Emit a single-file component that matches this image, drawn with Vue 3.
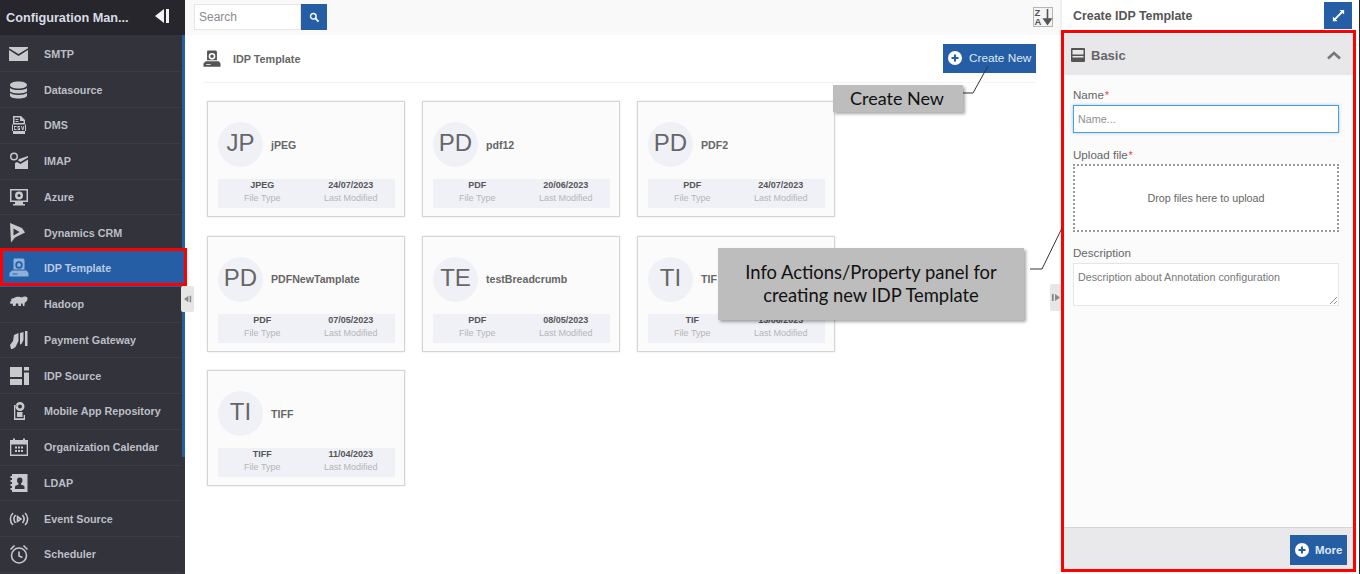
<template>
  <div class="page">
    <aside class="side">
      <header class="side-head">
        <span class="side-title">Configuration Man...</span>
        <svg class="collapse" viewBox="0 0 16 16"><path d="M10 1v14L1 8zM12 1h3v14h-3z" /></svg>
      </header>
      <nav class="nav">
        <a v-for="item in nav" :key="item.label" class="nav-item" :class="{ active: item.active }">
          <svg class="nav-icon" viewBox="0 0 20 20">
            <path v-if="item.fill" :d="item.fill" class="ifill" fill-rule="evenodd" />
            <path v-if="item.line" :d="item.line" class="iline" />
          </svg>
          <span>{{ item.label }}</span>
        </a>
      </nav>
    </aside>

    <main class="main">
      <div class="toolbar">
        <div class="search">
          <span class="search-input">Search</span>
          <button class="search-btn">
            <svg viewBox="0 0 14 14" width="11" height="11"><circle cx="5.5" cy="5.5" r="3.6" fill="none" stroke="#fff" stroke-width="1.8" /><path d="M8.2 8.2l4 4" stroke="#fff" stroke-width="2.4" /></svg>
          </button>
        </div>
        <svg class="sort" viewBox="0 0 20 20">
          <rect x=".5" y=".5" width="19" height="19" fill="#f4f4f4" stroke="#b5b5b5" />
          <text x="1.5" y="9" class="sort-t">Z</text>
          <text x="1.5" y="18" class="sort-t">A</text>
          <path d="M14.5 2v13M11 12l3.500 5 3.500-5z" stroke="#555" stroke-width="1.6" fill="#555" />
        </svg>
      </div>
      <div class="content">
        <div class="heading">
          <svg class="head-icon" viewBox="0 0 20 20">
            <path :d="idpIcon" fill="#555" fill-rule="evenodd" />
          </svg>
          <span class="head-title">IDP Template</span>
          <button class="btn create">
            <svg class="plus" viewBox="0 0 14 14"><circle cx="7" cy="7" r="7" fill="#fff" /><path d="M3.5 7h7M7 3.5v7" stroke="#255ea5" stroke-width="2" /></svg>
            Create New
          </button>
        </div>
        <div class="cards">
          <article v-for="card in cards" :key="card.name" class="card">
            <div class="card-top">
              <div class="avatar">{{ card.initials }}</div>
              <div class="card-name">{{ card.name }}</div>
            </div>
            <div class="stats">
              <div class="stat"><b>{{ card.type }}</b><span>File Type</span></div>
              <div class="stat"><b>{{ card.date }}</b><span>Last Modified</span></div>
            </div>
          </article>
        </div>
      </div>
    </main>

    <section class="panel">
      <div class="panel-head">
        <span>Create IDP Template</span>
        <button class="expand">
          <svg viewBox="0 0 16 16" width="15" height="15"><path d="M9 2h5v5l-1.8-1.8L5.2 12.2 7 14H2V9l1.8 1.8 7-7z" fill="#fff" /></svg>
        </button>
      </div>
      <div class="panel-body">
        <div class="section">
          <svg class="sec-icon" viewBox="0 0 14 14"><path d="M0 1a1 1 0 0 1 1-1h12a1 1 0 0 1 1 1v12a1 1 0 0 1-1 1H1a1 1 0 0 1-1-1zM1.500 2v4.500h11V2zM1.500 8v1.500h11V8z" fill="#555" fill-rule="evenodd" /></svg>
          <span class="sec-title">Basic</span>
          <svg class="chev" viewBox="0 0 14 9"><path d="M1 7.500l6-5.500 6 5.500" fill="none" stroke="#777" stroke-width="2.600" /></svg>
        </div>
        <form class="form">
          <label class="lbl name-lbl">Name<i>*</i></label>
          <div class="input">Name...</div>
          <label class="lbl up-lbl">Upload file<i>*</i></label>
          <div class="drop">Drop files here to upload</div>
          <label class="lbl desc-lbl">Description</label>
          <div class="area">
            Description about Annotation configuration
            <svg class="grip" viewBox="0 0 9 9"><path d="M1 8l7-7M5 8l3-3" stroke="#888" stroke-width=".9" /></svg>
          </div>
        </form>
        <div class="panel-foot">
          <button class="btn more">
            <svg class="plus" viewBox="0 0 14 14"><circle cx="7" cy="7" r="7" fill="#fff" /><path d="M3.500 7h7M7 3.500v7" stroke="#255ea5" stroke-width="2" /></svg>
            More
          </button>
        </div>
      </div>
    </section>

    <div class="handle left"><svg viewBox="0 0 10 10" width="8" height="8"><path d="M5.500 1v8L0 5zM7 1h2v8H7z" fill="#888" /></svg></div>
    <div class="handle right"><svg viewBox="0 0 10 10" width="9" height="9"><path d="M1 1h2v8H1zM4.500 1v8L10 5z" fill="#888" /></svg></div>

    <div class="frame frame-nav"></div>
    <div class="frame frame-panel"></div>

    <svg class="wires" viewBox="0 0 1360 574">
      <path d="M963 93h10l15-27" />
      <path d="M1030 269h12l20-41" />
    </svg>
    <div class="note note-create">Create New</div>
    <div class="note note-info">Info Actions/Property panel for<br />creating new IDP Template</div>
  </div>
</template>

<script setup>
const idpIcon =
  'M5 .5h9.500l1 1.500v9.500h-11V2zM10 3.300a3.700 3.700 0 1 0 0 7.400 3.700 3.700 0 0 0 0-7.400zM10 5a2 2 0 1 1 0 4 2 2 0 0 1 0-4zM3 12.500h14.500l2 2.500v3.500H.500V15zM3.500 15.500v1h5v-1z'

const nav = [
  { label: 'SMTP', fill: 'M0 3h19v1.200L9.500 10 0 4.200zM0 6l9.500 6L19 6v11H0z' },
  {
    label: 'Datasource',
    fill: 'M1 5c0-2 3.500-3.500 8.500-3.500S18 3 18 5s-3.500 3.500-8.500 3.500S1 7 1 5zM1 8c1.500 1.500 4.500 2 8.500 2s7-.5 8.500-2v3.500c-1.500 1.300-4.500 2-8.500 2s-7-.7-8.500-2zM1 13c1.500 1.300 4.500 2 8.500 2s7-.7 8.500-2v2.500c0 1.700-3.500 3-8.500 3S1 17.200 1 15.500z'
  },
  {
    label: 'DMS',
    fill: 'M4 1h8l4 4v14H4zM5.500 2.500v5.500h9V6h-3.500V2.500zM6.500 4h3v1h-3zM6.500 6h3v1h-3zM3 9.500v6.500h14V9.500zM5 11h2.500v1H5.800v2h1.700v1H5zM8.500 11h2.500v1H9.500v.8H11V15H8.500v-1H10v-.6H8.500zM12 11h1l.7 3 .7-3h1l-1 4h-1.400z'
  },
  {
    label: 'IMAP',
    fill: 'M5 1.500a4 4 0 1 1 0 8 4 4 0 0 1 0-8zM5 3a2.500 2.500 0 1 0 0 5 2.500 2.500 0 0 0 0-5zM10 8l9-3v1.500L11.500 11 9 9.500zM8 11l3.500 2L19 8.500V18H6v-6z'
  },
  {
    label: 'Azure',
    fill: 'M1 2h18v13H1zM2.500 3.500v10h15v-10zM6 15h8v2h2v1.500H4V17h2zM10 4.500a4 4 0 1 1 0 8 4 4 0 0 1 0-8zM10 7a1.500 1.500 0 1 0 0 3 1.500 1.500 0 0 0 0-3z'
  },
  { label: 'Dynamics CRM', fill: 'M1 0l12 5 3 4.500-10 5L2 19.500zM4.500 5.500v7l6-3.500z' },
  { label: 'IDP Template', fill: idpIcon, active: true },
  {
    label: 'Hadoop',
    fill: 'M5 4c2-1.500 6-1.500 8-.5 1.500-1.500 5-1.500 5.500.5.400 2-1 4-2.500 4.500-.5 1-.5 2-.5 3.500H14l-.5-2.500H12V12H9.500l-.3-2.500H7L6.500 12H4L3.700 9.500 1.500 10 1 7.500 2.500 7 2 5z'
  },
  {
    label: 'Payment Gateway',
    fill: 'M16 1h2.500v15H16zM11 3l3.500-1v8l-2 4-1.500.5zM5 5l4.500-2v8l-3 6-3 2H2l-1-4 3-4z'
  },
  { label: 'IDP Source', fill: 'M1 1h12v10H1zM15 1h5v3.500h-5zM15 6.500h5V19h-5zM1 13h12v6H1z' },
  {
    label: 'Mobile App Repository',
    fill: 'M5 4h2.500v1.300H6.300v12h8.400V14H16v5H5zM11 1a4.500 4.500 0 1 1 0 9 4.500 4.500 0 0 1 0-9zM11 3.500a2 2 0 1 0 0 4 2 2 0 0 0 0-4zM8 11h5.500v5H8z'
  },
  {
    label: 'Organization Calendar',
    fill: 'M1 3h3V1.500h2V3h8V1.500h2V3h3v16H1zM2.300 7.500v10h15.400v-10zM6 9.500h2v2H6zM9 9.500h2v2H9zM12 9.500h2v2h-2zM6 13h2v2H6zM9 13h2v2H9zM12 13h2v2h-2z'
  },
  {
    label: 'LDAP',
    fill: 'M3 1h15.500v18H3zM1.500 3H3v2H1.500zM1.500 7H3v2H1.500zM1.500 11H3v2H1.500zM1.500 15H3v2H1.500zM10.500 4.500a2.500 3 0 0 0-2.500 3c0 1.500 1 2.500 1.500 3v1c-1.500.5-3.500 1-3.500 2.500V16h9.500v-2c0-1.500-2-2-3.500-2.500v-1c.5-.5 1.500-1.500 1.500-3a2.500 3 0 0 0-2.500-3z'
  },
  {
    label: 'Event Source',
    line: 'M4 4c-3.500 3-3.500 9 0 12M6.500 6c-2 2.500-2 5.500 0 8M16 4c3.500 3 3.500 9 0 12M13.500 6c2 2.500 2 5.500 0 8M8.500 7.500v5l3.500-2.500z'
  },
  {
    label: 'Scheduler',
    line: 'M10 4a7.500 7.500 0 1 1 0 15 7.500 7.500 0 0 1 0-15zM10 7.500V12l3.500 1.500M1.500 5.500L5.500 1.500M18.500 5.500L14.500 1.500'
  }
]

const cards = [
  { initials: 'JP', name: 'jPEG', type: 'JPEG', date: '24/07/2023' },
  { initials: 'PD', name: 'pdf12', type: 'PDF', date: '20/06/2023' },
  { initials: 'PD', name: 'PDF2', type: 'PDF', date: '24/07/2023' },
  { initials: 'PD', name: 'PDFNewTamplate', type: 'PDF', date: '07/05/2023' },
  { initials: 'TE', name: 'testBreadcrumb', type: 'PDF', date: '08/05/2023' },
  { initials: 'TI', name: 'TIF', type: 'TIF', date: '13/06/2023' },
  { initials: 'TI', name: 'TIFF', type: 'TIFF', date: '11/04/2023' }
]
</script>

<style>
html, body { margin: 0; background: #fff; overflow: hidden; }
</style>

<style scoped>
.page {
  position: relative;
  display: flex;
  width: 1360px;
  height: 574px;
  overflow: hidden;
  background: #fff;
  font-family: "Liberation Sans", Arial, sans-serif;
}
.side {
  width: 185px;
  flex: none;
  background: #32333b;
  display: flex;
  flex-direction: column;
}
.side-head {
  height: 35px;
  flex: none;
  background: #26262c;
  display: flex;
  align-items: center;
  padding: 0 15px 0 6px;
  color: #d8dce4;
  justify-content: space-between;
  box-sizing: border-box;
}
.side-title { font-size: 12.700px; font-weight: 700; }
.collapse { width: 16px; height: 16px; fill: #f2f2f2; margin-top: -4px; }
.nav {
  flex: 1;
  padding-top: 1.500px;
  background: linear-gradient(#255ea5, #255ea5) right top / 3px 422px no-repeat;
}
.nav-item {
  height: 35.750px;
  box-sizing: border-box;
  width: 181px;
  display: flex;
  align-items: center;
  padding-left: 9px;
  gap: 15px;
  font-size: 10.750px;
  font-weight: 700;
  color: #bdbfc6;
  background: #32333b;
  border-bottom: 1px solid #3b3c44;
}
.nav-item.active { background: #255ea5; color: #b9cbe6; width: 185px; border-bottom-color: #255ea5; }
.nav-item.active .ifill { fill: #8fb0dc; }
.nav-icon { width: 20px; height: 20px; flex: none; }
.ifill { fill: #c8c9cc; }
.iline { fill: none; stroke: #c8c9cc; stroke-width: 1.600; }

.main { flex: 1; display: flex; flex-direction: column; min-width: 0; }
.toolbar {
  height: 35px;
  box-sizing: border-box;
  background: #f9f9f9;
  display: flex;
  align-items: center;
  justify-content: space-between;
  padding: 0 7px 0 9px;
  border-right: 2px solid #f0f0f0;
}
.search { display: flex; height: 26px; margin-top: -1px; }
.search-input {
  width: 107px;
  box-sizing: border-box;
  background: #fff;
  border: 1px solid #e6e6e6;
  color: #8b8b8b;
  font-size: 12px;
  line-height: 24px;
  padding-left: 4px;
}
.search-btn {
  width: 26px;
  padding: 0;
  border: 0;
  background: #255ea5;
  display: flex;
  align-items: center;
  justify-content: center;
}
.sort { width: 20px; height: 20px; margin-top: -1px; }
.sort-t { font-size: 9.500px; font-weight: 700; fill: #555; font-family: "Liberation Sans", sans-serif; }
.content { flex: 1; padding: 0 26px 0 18px; }
.heading {
  height: 48px;
  box-sizing: border-box;
  display: flex;
  align-items: center;
  border-bottom: 1px solid #f3f3f3;
}
.head-icon { width: 18px; height: 18px; }
.head-title { margin-left: 12px; font-size: 10.800px; font-weight: 700; color: #666; }
.btn {
  border: 0;
  background: #255ea5;
  color: #dfe8f6;
  font: 400 11.800px "Liberation Sans", Arial, sans-serif;
  display: flex;
  align-items: center;
  padding: 0;
}
.create { margin-left: auto; width: 93px; height: 29px; padding-left: 5px; gap: 7px; box-sizing: border-box; margin-top: -1px; }
.plus { width: 14px; height: 14px; flex: none; }
.cards {
  display: grid;
  grid-template-columns: repeat(3, 198px);
  grid-auto-rows: 116px;
  column-gap: 17px;
  row-gap: 18.500px;
  padding: 18px 0 0 4px;
}
.card {
  box-sizing: border-box;
  border: 1px solid #d5d5d5;
  background: #fbfbfc;
  box-shadow: 0 0 2px rgba(0, 0, 0, .12);
  padding: 20px 9px 0 10px;
}
.card-top { display: flex; align-items: center; height: 45px; gap: 8px; }
.avatar {
  width: 45px;
  height: 45px;
  border-radius: 50%;
  background: #f0f1f7;
  color: #666;
  font-size: 24px;
  line-height: 42px;
  text-align: center;
}
.card-name { font-size: 10.600px; font-weight: 700; color: #666; }
.stats {
  margin-top: 12px;
  height: 29px;
  background: #f0f1f7;
  display: grid;
  grid-template-columns: 1fr 1fr;
  align-items: start;
}
.stat { display: flex; flex-direction: column; align-items: center; font-size: 9px; line-height: 13px; }
.stat b { color: #555; }
.stat span { color: #b5b5b5; }

.panel {
  width: 298px;
  flex: none;
  display: flex;
  flex-direction: column;
  padding-right: 5px;
  box-sizing: border-box;
  border-right: 1px solid #222;
}
.panel-head {
  height: 31px;
  flex: none;
  display: flex;
  align-items: flex-start;
  justify-content: space-between;
  padding: 9px 2px 0 11px;
  box-sizing: border-box;
  font-size: 12.400px;
  font-weight: 700;
  color: #555;
}
.expand {
  width: 28px;
  height: 27px;
  margin: -7px 0 0 0;
  padding: 0;
  border: 0;
  background: #255ea5;
  display: flex;
  align-items: center;
  justify-content: center;
}
.panel-body { flex: 1; display: flex; flex-direction: column; background: #fbfbfb; margin-left: 2px; }
.section {
  height: 41px;
  margin-top: 3px;
  flex: none;
  box-sizing: border-box;
  background: #e8e8ea;
  display: flex;
  align-items: center;
  padding: 1px 12px 0 7px;
  margin-right: 1px;
}
.sec-icon { width: 14px; height: 14px; }
.sec-title { margin-left: 6px; font-size: 13px; font-weight: 700; color: #666; }
.chev { width: 14px; height: 9px; margin-left: auto; }
.form { flex: 1; padding: 0 15px 0 9px; display: flex; flex-direction: column; }
.lbl { font-size: 11.600px; color: #666; line-height: 14px; }
.lbl i { color: #ee3333; font-style: normal; margin-left: 1px; font-size: 10px; }
.name-lbl { margin-top: 13px; }
.input {
  height: 28px;
  box-sizing: border-box;
  margin-top: 2px;
  border: 1px solid #4a9fe0;
  box-shadow: 0 0 3px rgba(74, 159, 224, .5);
  background: #fff;
  font-size: 10.750px;
  line-height: 26px;
  padding-left: 4px;
  color: #8f8f8f;
}
.up-lbl { margin-top: 15px; }
.drop {
  height: 68px;
  box-sizing: border-box;
  margin-top: 1px;
  border: 2px dotted #999;
  background: #fff;
  font-size: 10.750px;
  color: #666;
  display: flex;
  align-items: center;
  justify-content: center;
}
.desc-lbl { margin-top: 14px; }
.area {
  position: relative;
  height: 43px;
  box-sizing: border-box;
  margin-top: 3px;
  border: 1px solid #e5e5e5;
  background: #fff;
  padding: 7px 4px 0;
  font-size: 10.750px;
  color: #777;
}
.grip { position: absolute; right: 0; bottom: 0; width: 9px; height: 9px; }
.panel-foot {
  height: 44px;
  flex: none;
  box-sizing: border-box;
  border-top: 1px solid #d5d5d5;
  background: #e9e9eb;
  display: flex;
  justify-content: flex-end;
  align-items: center;
  padding-right: 7px;
  margin-bottom: 3px;
}
.more { width: 57px; height: 30px; padding-left: 5px; gap: 6px; box-sizing: border-box; font-weight: 700; font-size: 11.500px; }

.handle {
  position: absolute;
  background: #e6e6e6;
  display: flex;
  align-items: center;
  justify-content: center;
  border-radius: 2px;
}
.handle.left { left: 181px; top: 286px; width: 13px; height: 26px; }
.handle.right { left: 1050px; top: 284px; width: 11px; height: 27px; }

.frame { position: absolute; border: 3px solid #ff0000; box-sizing: border-box; pointer-events: none; }
.frame-nav { left: 0; top: 248px; width: 187px; height: 38px; }
.frame-panel { left: 1061px; top: 30px; width: 295px; height: 542px; }

.wires { position: absolute; left: 0; top: 0; width: 1360px; height: 574px; pointer-events: none; }
.wires path { fill: none; stroke: #333; stroke-width: 1; }
.note {
  position: absolute;
  background: #bdbdbd;
  box-shadow: 2px 2px 3px rgba(0, 0, 0, .35);
  color: #111;
  font-family: Lato, "Open Sans", sans-serif;
  text-align: center;
}
.note-create { left: 833px; top: 85px; width: 130px; height: 27px; line-height: 27px; font-size: 18px; box-sizing: border-box; padding-right: 2px; }
.note-info { left: 718px; top: 248px; width: 306px; height: 72px; box-sizing: border-box; padding-top: 13px; font-size: 18.400px; line-height: 23px; }
</style>
